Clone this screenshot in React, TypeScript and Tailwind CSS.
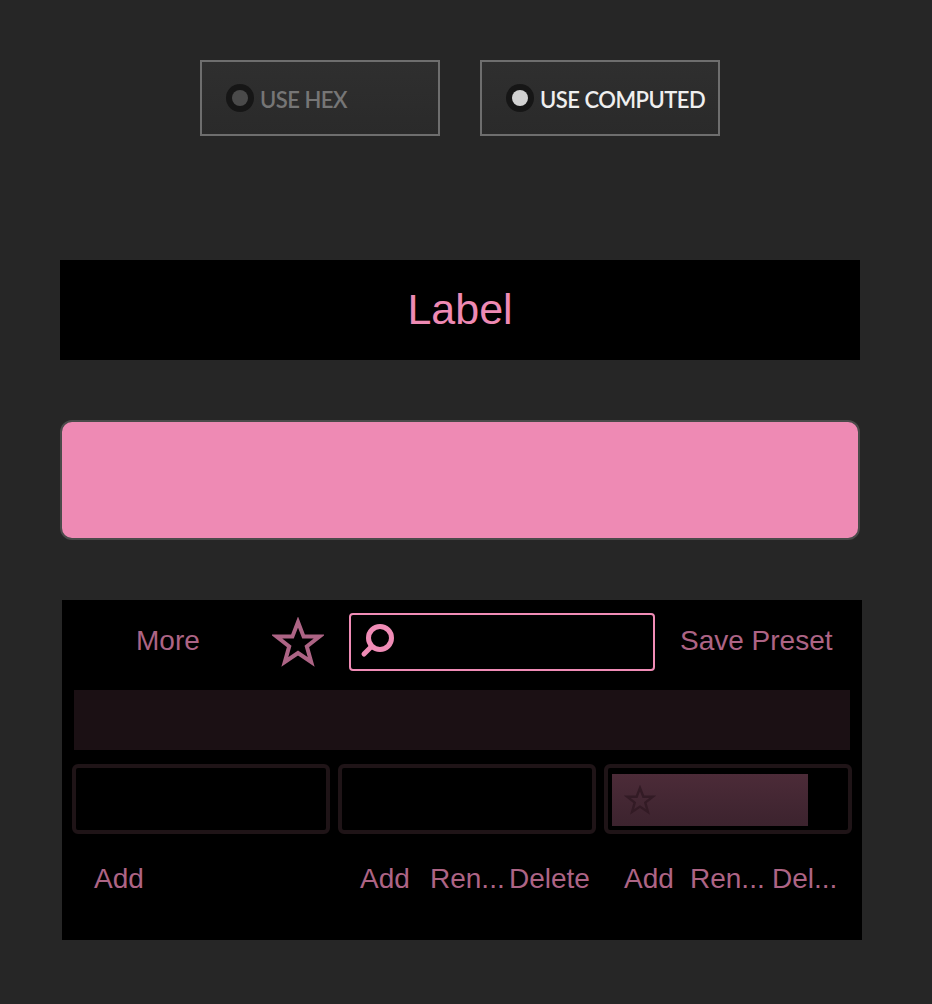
const SANS = "font-['Liberation_Sans',Arial,sans-serif]";

function StarIcon({ className, stroke, width }: { className: string; stroke: string; width: number }) {
  return (
    <svg viewBox="0 0 52 50" className={className} fill="none">
      <path
        d="M26 5 L31.6 19.6 L47.4 19.6 L34.8 29.4 L39.2 45 L26 36 L12.8 45 L17.2 29.4 L4.6 19.6 L20.4 19.6 Z"
        stroke={stroke}
        strokeWidth={width}
        strokeLinejoin="miter"
      />
    </svg>
  );
}

function Toggle({ label, active }: { label: string; active?: boolean }) {
  return (
    <div className="flex h-[76px] w-[240px] items-center border-2 border-[#6e6e6e] bg-gradient-to-b from-[#2f2f2f] to-[#2a2a2a] pl-[24px]">
      <div className="flex h-[28px] w-[28px] items-center justify-center rounded-full bg-[#161616]">
        <div className={`h-[16px] w-[16px] rounded-full ${active ? "bg-[#d2d2d2]" : "bg-[#4a4a4a]"}`} />
      </div>
      <span
        className={`ml-[6px] mt-[3px] whitespace-nowrap font-['Lato',sans-serif] text-[22px] font-semibold tracking-[-0.5px] ${
          active ? "text-[#efefef]" : "text-[#767676]"
        }`}
      >
        {label}
      </span>
    </div>
  );
}

function Action({ children, className }: { children: string; className: string }) {
  return <span className={`absolute top-[1px] whitespace-nowrap text-[28px] leading-[32px] text-[#ad6485] ${className}`}>{children}</span>;
}

export default function App() {
  return (
    <div className={`h-[1004px] w-[932px] overflow-hidden bg-[#262626] ${SANS}`}>
      <div className="ml-[200px] flex gap-[40px] pt-[60px]">
        <Toggle label="USE HEX" />
        <Toggle label="USE COMPUTED" active />
      </div>

      <div className="ml-[60px] mt-[124px] flex h-[100px] w-[800px] items-center justify-center bg-black pb-[1px] text-[43px] text-[#ee8ab4]">
        Label
      </div>

      <div className="ml-[60px] mt-[60px] h-[120px] w-[800px] rounded-[12px] border-2 border-[#4a4a4a] bg-[#ee8ab4]" />

      <div className="ml-[62px] mt-[60px] h-[340px] w-[800px] bg-black px-[10px]">
        <div className="flex h-[90px] items-center pb-[6px]">
          <span className="ml-[64px] mt-[-2px] w-[136px] text-[28px] text-[#ad6485]">More</span>
          <StarIcon className="mt-[-1px] h-[50px] w-[52px]" stroke="#ad6485" width={4} />
          <div className="ml-[25px] flex h-[58px] w-[306px] items-center rounded-[4px] border-2 border-[#f08cb6] pl-[8px]">
            <svg viewBox="0 0 36 36" className="h-[36px] w-[36px]" fill="none" stroke="#f08cb6" strokeWidth="5" strokeLinecap="round">
              <circle cx="21" cy="14" r="11.5" />
              <path d="M12 23 L5 30" />
            </svg>
          </div>
          <span className="ml-[25px] mt-[-2px] whitespace-nowrap text-[28px] text-[#ad6485]">Save Preset</span>
        </div>

        <div className="ml-[2px] h-[60px] w-[776px] bg-[#1b1014]" />

        <div className="mt-[14px] grid grid-cols-[258px_258px_248px] gap-[8px]">
          <div className="h-[70px] rounded-[6px] border-4 border-[#1f1417]" />
          <div className="h-[70px] rounded-[6px] border-4 border-[#1f1417]" />
          <div className="h-[70px] rounded-[6px] border-4 border-[#1f1417] pl-[4px] pt-[6px]">
            <div className="flex h-[52px] w-[196px] items-center bg-gradient-to-b from-[#4c2b38] to-[#3c232e] pl-[12px]">
              <StarIcon className="h-[30px] w-[32px]" stroke="#331b25" width={4} />
            </div>
          </div>
        </div>

        <div className="relative mt-[28px] h-[32px]">
          <Action className="left-[22px]">Add</Action>
          <Action className="left-[288px]">Add</Action>
          <Action className="left-[358px]">Ren...</Action>
          <Action className="left-[437px]">Delete</Action>
          <Action className="left-[552px]">Add</Action>
          <Action className="left-[618px]">Ren...</Action>
          <Action className="left-[700px]">Del...</Action>
        </div>
      </div>
    </div>
  );
}
